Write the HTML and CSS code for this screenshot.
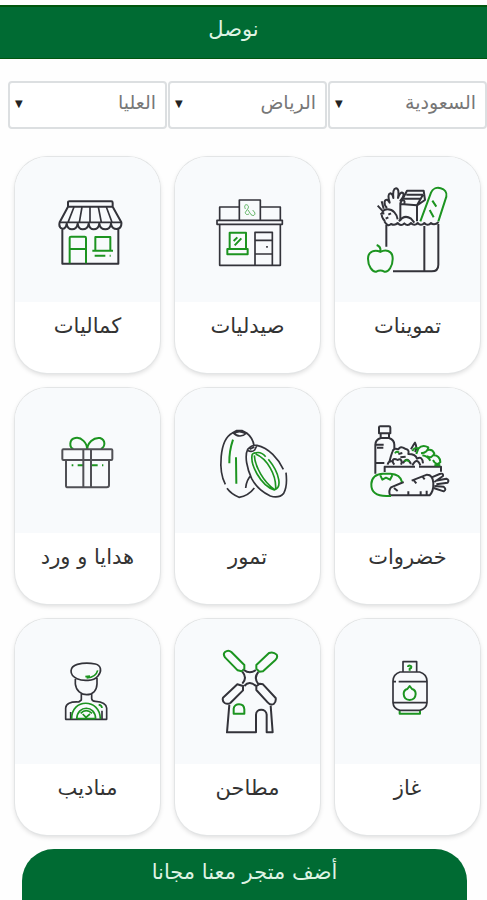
FILE: index.html
```
<!DOCTYPE html>
<html lang="ar" dir="rtl">
<head>
    <meta charset="utf-8">
    <meta name="viewport" content="width=device-width, initial-scale=1">
    <title>نوصل</title>
    <link rel="stylesheet" href="styles.css">
</head>
<body>
    <header class="header">
        <h1>نوصل</h1>
    </header>

    <form class="filters">
        <div class="select-box">
            <select aria-label="الدولة"><option>السعودية</option></select>
        </div>
        <div class="select-box">
            <select aria-label="المدينة"><option>الرياض</option></select>
        </div>
        <div class="select-box">
            <select aria-label="الحي"><option>العليا</option></select>
        </div>
    </form>

    <main class="grid">
        <a class="card" href="#">
            <!-- grocery bag -->
            <svg class="icon thick" viewBox="0 21 435 435">
                <path d="M154 290V224M174 364H290Q310 364 310 344V222M268 228V362"/>
                <path d="M148 214Q158 232 168 222Q180 228 188 219Q198 230 208 220Q218 230 228 219Q238 230 248 219Q258 230 268 219Q278 230 288 219Q298 228 311 216"/>
                <path d="M196 212V160L216 122H266L270 150L246 166V214M196 162L246 166L264 134M214 134H264M202 146H256"/>
                <path d="M192 214Q208 192 228 206L238 218M150 213C132 196 142 178 158 178C174 178 186 192 188 208M128 167L144 184M140 154L146 176M136 192L148 190M160 194L168 190M152 206L160 202"/>
                <path d="M156 174C144 162 148 146 158 150L164 158Q156 132 166 130Q174 132 175 144Q172 116 183 115Q194 116 189 144Q196 122 205 130Q208 140 196 152Q212 146 208 162"/>
                <g class="green">
                    <path d="M256 214L288 128C298 102 340 114 334 140L310 214M292 152L304 170M284 180L296 202"/>
                    <path d="M136 306C122 298 99 302 99 326C99 348 112 367 124 365Q136 358 148 365C160 368 174 348 173 324C172 300 150 298 136 306ZM136 306Q139 290 125 285"/>
                </g>
            </svg>
            <span class="name">تموينات</span>
        </a>
        <a class="card" href="#">
            <!-- pharmacy -->
            <svg class="icon" viewBox="0 21 435 435">
                <path d="M193 171H134V210M256 171H316V210M193 209V150H256V209M126 211H322V223H126ZM134 224V346H316V224"/>
                <path d="M240 346V247H292V346M240 271H292M240 312H292M276 288V293"/>
                <path class="green thin" d="M211 177C202 157 228 163 218 177L211 187Q212 197 222 192M219 180L228 194Q239 201 240 189L233 180"/>
                <path class="green thick" d="M164 297V248H213V297M157 297H218V313H157ZM176 273L187 262M179 286L199 265"/>
            </svg>
            <span class="name">صيدليات</span>
        </a>
        <a class="card" href="#">
            <!-- shop -->
            <svg class="icon" viewBox="15 21 435 435">
                <path class="thick" d="M174 169V156Q174 154 178 154H304Q308 154 308 158V169M174 170H308L334 217Q336 235 320 237Q306 237 303 222Q300 238 286 238Q271 238 268 222Q265 238 251 238Q239 238 236 222Q233 238 218 238Q206 238 203 222Q200 238 186 238Q173 238 170 222Q167 237 157 236Q145 232 149 217ZM157 238V341H325V238"/>
                <path d="M149 217H334M192 171L174 217M216 171L208 217M240 171V217M265 171L274 217M289 171L306 217M236 217V224M203 217V224M170 217V224M268 217V224M303 217V224"/>
                <path class="green thick" d="M179 340V263Q179 260 183 260H224Q228 260 228 264V340M180 297H228M256 301V261H301V301M247 302H309M254 317H286M299 317H302"/>
            </svg>
            <span class="name">كماليات</span>
        </a>

        <a class="card" href="#">
            <!-- vegetables -->
            <svg class="icon thick" viewBox="0 24 435 435">
                <path d="M132 142Q132 139 136 139H162Q166 139 166 143V160H132ZM137 161V174Q121 180 121 194V281M162 161V174Q178 180 178 194V206M137 174H162M122 194H146M122 249H148M126 203H145"/>
                <path d="M149 276V260H240M252 260H318V275M178 254C168 242 174 232 188 240C196 234 204 242 198 254M163 246Q168 226 172 216Q176 202 190 208Q196 196 210 206Q224 208 220 222Q242 222 246 236Q262 226 264 250M204 250Q216 228 228 252M232 256Q246 230 256 256M158 254Q160 242 172 244M190 222L202 219M196 232L212 230M228 208Q238 190 240 188Q248 204 240 216"/>
                <path d="M165 346Q160 332 168 322L206 306M230 302L276 284Q294 284 295 310Q296 334 284 346H166M177 324L188 333M237 302L244 310M261 288L269 298M220 346V334M257 346V334M275 346V332"/>
                <path d="M290 292L314 282Q326 278 324 288L298 306M302 302L334 296Q344 300 338 308L304 313M298 318L326 320Q336 328 326 334L296 324"/>
                <g class="green">
                    <path d="M168 348H154C124 348 108 336 109 312C110 292 124 282 144 281H166C186 282 198 292 201 306M136 286L142 299L153 293L165 299L172 286"/>
                    <path d="M232 213Q240 200 250 206L244 222M250 206Q262 192 280 202Q278 218 258 220M278 210Q292 206 298 220Q290 238 276 228M296 226Q314 226 316 246Q304 260 294 240M262 226Q278 228 286 242M298 256H316M180 220Q184 212 192 218M208 244Q218 236 222 246"/>
                </g>
            </svg>
            <span class="name">خضروات</span>
        </a>
        <a class="card" href="#">
            <!-- dates -->
            <svg class="icon" viewBox="0 24 435 435">
                <path d="M151 313C130 274 132 180 172 159L184 152H202L215 159Q234 174 237 197M156 325Q168 342 192 352Q220 348 238 324M174 158Q183 168 195 168Q207 167 215 159M178 160Q192 150 210 160"/>
                <path d="M325 268C310 236 282 204 246 196Q230 194 218 208C208 228 216 266 230 296Q248 330 286 348Q312 356 326 340Q338 318 333 278M217 211Q230 218 239 210L246 196M224 208L238 201M228 286Q214 300 212 324"/>
                <path class="green thick" d="M174 179Q162 214 163 250M183 232L184 311"/>
                <path class="green" d="M232 222C224 252 256 316 298 330Q316 324 311 298C306 272 290 250 280 238M232 222Q256 210 272 230M238 226C240 260 266 306 298 328M242 222C276 236 304 284 302 326"/>
            </svg>
            <span class="name">تمور</span>
        </a>
        <a class="card" href="#">
            <!-- gift -->
            <svg class="icon thick" viewBox="15 24 435 435">
                <path class="green" d="M231 207C232 190 214 170 196 174C176 178 178 202 190 207M232 207C232 190 250 171 270 174C288 180 286 200 273 207M185 256H190M203 256H220M245 256H263M276 256H280"/>
                <path class="grey" d="M160 208H304Q307 208 307 211V237Q307 240 304 240H160Q157 240 157 237V211Q157 208 160 208ZM168 241V317Q168 322 174 322H290Q297 322 297 316V241M220 208V322M243 208V322"/>
            </svg>
            <span class="name">هدايا و ورد</span>
        </a>

        <a class="card" href="#">
            <!-- gas cylinder -->
            <svg class="icon" viewBox="0 27 435 435">
                <path d="M204 185V155H245V185M195 186H254Q275 192 276 213V278Q275 296 254 301H195Q175 296 174 278V213Q175 192 195 186ZM174 215H183M191 215H276M174 278H276"/>
                <path class="green thick" d="M194 303V311H255V303M219 171Q219 166 225 167Q231 168 228 174L224 176V182M224 228L231 237Q242 240 242 252Q241 269 224 270Q207 269 206 252Q206 240 217 237Z"/>
            </svg>
            <span class="name">غاز</span>
        </a>
        <a class="card" href="#">
            <!-- windmill -->
            <svg class="icon thick" viewBox="0 27 435 435">
                <path class="green" d="M188 181L150 142Q143 132 150 126Q160 118 169 126L208 165V176L200 184ZM244 176V165L282 129Q295 124 305 134Q309 142 302 149L264 184L253 185Z"/>
                <path d="M207 180Q224 194 243 180M202 185Q218 204 202 221M250 186Q235 204 250 222M208 228Q223 210 244 229M187 223L144 263Q141 274 149 279Q158 284 166 279L204 241V228ZM264 223L302 264Q304 275 296 282Q287 287 278 277L244 240V229L254 221Z"/>
                <path d="M163 284L156 367H243V314C243 294 274 294 275 314V367H293L287 287"/>
                <path class="green" d="M176 311V296C178 278 207 278 208 298V311Z"/>
            </svg>
            <span class="name">مطاحن</span>
        </a>
        <a class="card" href="#">
            <!-- courier -->
            <svg class="icon" viewBox="15 27 435 435">
                <path d="M201 206C176 194 178 170 202 163Q228 156 256 162C274 166 276 184 264 198Q252 212 232 211Q214 212 201 206ZM196 207V222C198 242 214 254 230 254C248 254 260 242 261 222V204M214 250V270L206 276Q168 274 167 294V328H290V294Q288 276 256 274Q246 274 245 266V250M182 306V326M276 302V326"/>
                <path class="green" d="M230 204Q258 202 263 181M226 200L240 198M185 327C184 264 270 264 271 327M200 327C202 284 256 284 257 327M202 326H256M212 310Q228 294 246 310M218 312L228 322L240 312M228 322V327M266 284Q276 286 276 294"/>
            </svg>
            <span class="name">مناديب</span>
        </a>
    </main>

    <button class="add-store" type="button">أضف متجر معنا مجانا</button>
</body>
</html>
```
FILE: styles.css
```
* {
    box-sizing: border-box;
}
body {
    margin: 0;
    padding-top: 5px;
    background-color: #fefefe;
    color: #333;
    font-family: "DejaVu Sans", sans-serif;
}
.header {
    height: 54px;
    padding-right: 20px;
    border-top: 2px solid #00560f;
    border-bottom: 1px solid #00560f;
    background-color: #006b33;
    color: #dff3e4;
    text-align: center;
}
.header h1 {
    margin: 0;
    font-size: 21px;
    font-weight: normal;
    line-height: 44px;
}
.filters {
    display: flex;
    gap: 1px;
    margin: 22px 0 0 8px;
}
.select-box {
    position: relative;
    flex: 1;
}
.select-box::after {
    content: "▼";
    position: absolute;
    left: 7px;
    top: 16px;
    font-size: 10px;
    line-height: 14px;
    color: #222;
    pointer-events: none;
}
.select-box select {
    display: block;
    width: 100%;
    height: 48px;
    padding: 0 9px 6px;
    border: 2px solid #dcdfe1;
    border-radius: 4px;
    background-color: #fff;
    color: #777;
    font-family: inherit;
    font-size: 19px;
    line-height: 36px;
    appearance: none;
}
.grid {
    display: grid;
    grid-template-columns: repeat(3, 1fr);
    gap: 15px;
    margin: 28px 7px 0 15px;
}
.card {
    overflow: hidden;
    border-radius: 32px;
    background-color: #fff;
    box-shadow: 0 0 0 1px #e3e5e6, 0 2px 5px rgba(0,0,0,0.15);
    color: #333;
    text-decoration: none;
    text-align: center;
}
.icon {
    display: block;
    width: 100%;
    background-color: #f8fafc;
    fill: none;
    stroke: #33333a;
    stroke-width: 5;
    stroke-linejoin: round;
}
.thick {
    stroke-width: 6;
}
.thin {
    stroke-width: 2;
}
.green {
    stroke: #1c9420;
}
.grey {
    stroke: #505055;
}
.name {
    display: block;
    height: 71px;
    font-size: 21px;
    line-height: 48px;
}
.add-store {
    display: block;
    width: calc(100% - 42px);
    height: 51px;
    margin: 14px 20px 0 22px;
    padding: 0 0 5px;
    border: none;
    border-radius: 32px 32px 0 0;
    background-color: #006b33;
    color: #dff3e4;
    font-family: inherit;
    font-size: 21px;
    cursor: pointer;
}
```
